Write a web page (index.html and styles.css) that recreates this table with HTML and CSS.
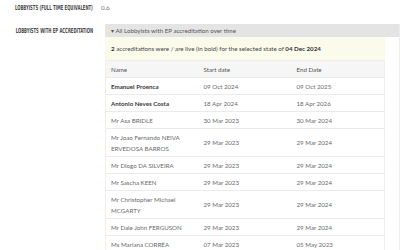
FILE: index.html
```html
<!DOCTYPE html>
<html>
<head>
<meta charset="utf-8">
<link rel="stylesheet" href="styles.css">
</head>
<body>
<div class="page">
  <div class="field field-first">
    <div class="label"><span class="label-text">LOBBYISTS (FULL TIME EQUIVALENT)</span></div>
    <div class="value">0.6</div>
  </div>
  <div class="field">
    <div class="label label-panel"><span class="label-text">LOBBYISTS WITH EP ACCREDITATION</span></div>
    <div class="panel">
      <div class="summary">▾ All Lobbyists with EP accreditation over time</div>
      <div class="content">
        <div class="notice"><b>2</b> accreditations were / are live (in bold) for the selected state of <b>04 Dec 2024</b></div>
        <table class="grid">
          <thead>
            <tr><th>Name</th><th>Start date</th><th>End Date</th></tr>
          </thead>
          <tbody>
            <tr class="live"><td>Emanuel Proenca</td><td>09 Oct 2024</td><td>09 Oct 2025</td></tr>
            <tr class="live"><td>Antonio Neves Costa</td><td>18 Apr 2024</td><td>18 Apr 2026</td></tr>
            <tr><td>Mr Asa BRIDLE</td><td>30 Mar 2023</td><td>30 Mar 2024</td></tr>
            <tr><td>Mr Joao Fernando NEIVA ERVEDOSA BARROS</td><td>29 Mar 2023</td><td>29 Mar 2024</td></tr>
            <tr><td>Mr Diogo DA SILVEIRA</td><td>29 Mar 2023</td><td>29 Mar 2024</td></tr>
            <tr><td>Mr Sascha KEEN</td><td>29 Mar 2023</td><td>29 Mar 2024</td></tr>
            <tr><td>Mr Christopher Michael MCGARTY</td><td>29 Mar 2023</td><td>29 Mar 2024</td></tr>
            <tr><td>Mr Dale John FERGUSON</td><td>29 Mar 2023</td><td>29 Mar 2024</td></tr>
            <tr><td>Ms Mariana CORRÊA</td><td>07 Mar 2023</td><td>05 May 2023</td></tr>
          </tbody>
        </table>
      </div>
    </div>
  </div>
</div>
</body>
</html>
```
FILE: styles.css
```css
html, body {
  margin: 0;
  padding: 0;
  background: #ffffff;
}
body {
  font-family: Lato, "Liberation Sans", sans-serif;
  color: #444;
}
.page {
  padding-top: 3px;
}
.field {
  display: grid;
  grid-template-columns: 93px 1fr;
  column-gap: 8px;
  align-items: start;
}
.field-first {
  height: 21px;
}
.label {
  display: flex;
  justify-content: flex-end;
  min-width: 0;
  font-family: "Liberation Sans Narrow", "DejaVu Sans Condensed", sans-serif;
  font-weight: bold;
  font-size: 7px;
  line-height: 10px;
  color: #4a4a4a;
  white-space: nowrap;
}
.label-text {
  flex: none;
  transform: scaleX(0.6);
  transform-origin: right center;
}
.label-panel {
  margin-top: 2px;
}
.value {
  font-size: 6.2px;
  line-height: 10px;
  color: #777;
}
.panel {
  margin-left: 4px;
  border-right: 1px solid #ececec;
  font-size: 6.2px;
}
.summary {
  height: 13px;
  line-height: 13px;
  background: #e4e4e4;
  padding-left: 6px;
  color: #555;
}
.content {
  width: 280px;
}
.notice {
  height: 23px;
  line-height: 23px;
  background: #fbfbec;
  padding-left: 6px;
  color: #444;
}
.notice b {
  color: #333;
}
.grid {
  width: 280px;
  table-layout: fixed;
  border-collapse: collapse;
  border: 1px solid #efefef;
}
.grid th, .grid td {
  text-align: left;
  padding: 2.5px 5px;
  line-height: 11px;
  border-bottom: 1px solid #ebebeb;
  vertical-align: middle;
}
.grid th {
  font-weight: normal;
  background: #f6f6f6;
  color: #555;
}
.grid td {
  color: #6a6a6a;
}
.grid tr.live td:first-child {
  font-weight: bold;
  color: #3a3a3a;
}
```
